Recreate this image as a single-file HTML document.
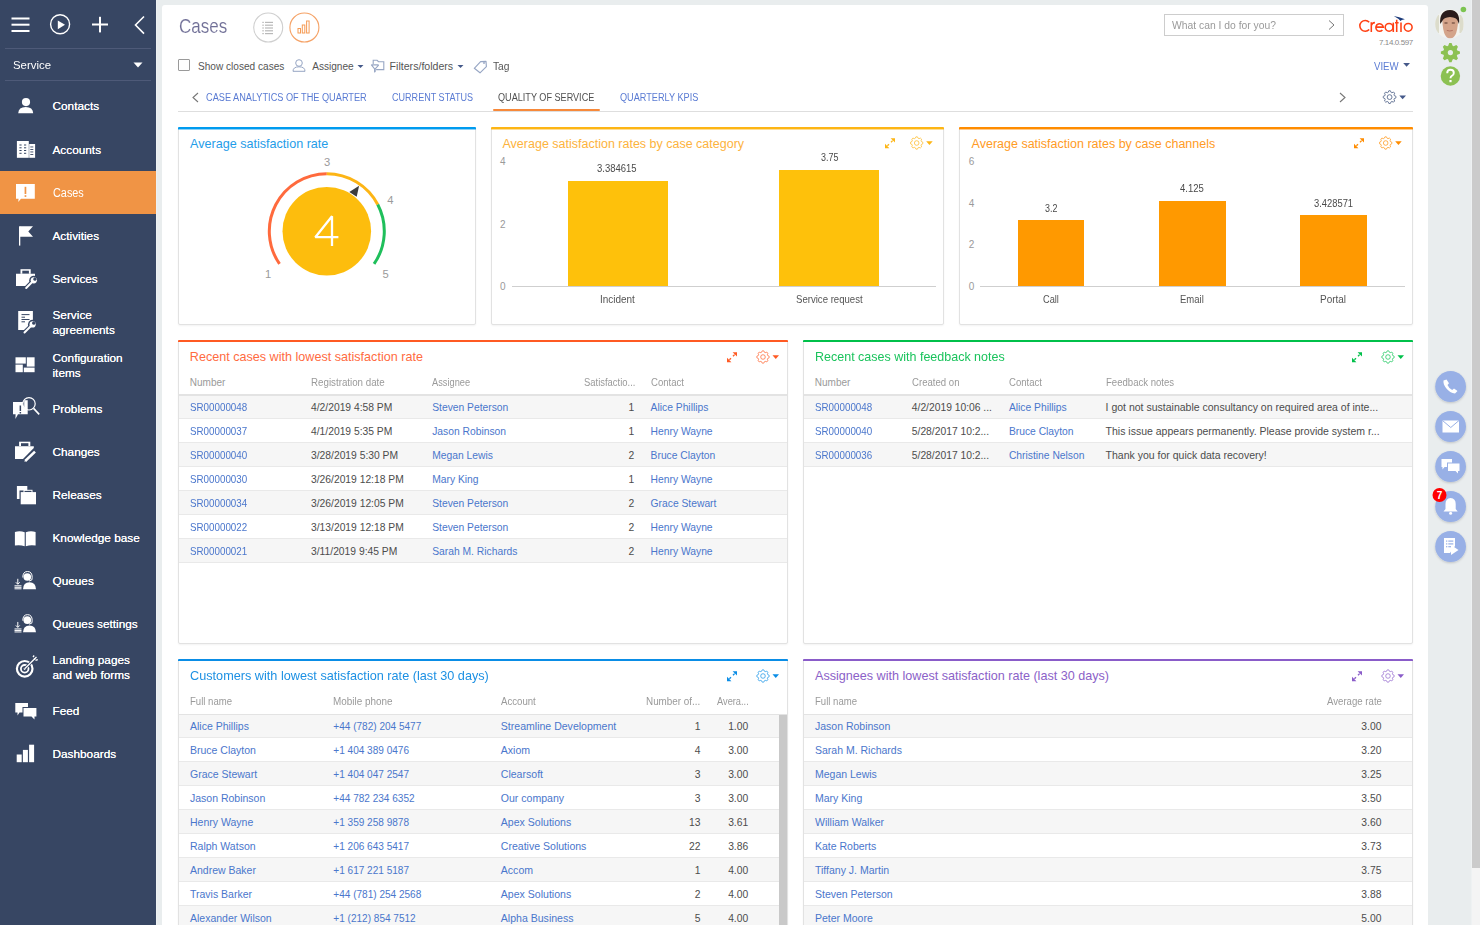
<!DOCTYPE html>
<html><head><meta charset="utf-8"><title>Cases</title>
<style>
*{box-sizing:border-box}
html,body{margin:0;padding:0}
body{width:1480px;height:925px;overflow:hidden;position:relative;background:#e9edee;font-family:"Liberation Sans", sans-serif;}
.abs{position:absolute}
.t{position:absolute;white-space:nowrap;line-height:1}
#sb{position:absolute;left:0;top:0;width:156px;height:925px;background:#374663}
#main{position:absolute;left:162px;top:5px;width:1266px;height:930px;background:#fff;border-radius:3px}
.panel{position:absolute;background:#fff;border:1px solid #e2e2e2;border-radius:2px;box-shadow:0 1px 2px rgba(0,0,0,0.05)}
</style></head><body>

<div id="sb"></div>
<div class="abs" style="left:156px;top:0;width:1px;height:925px;background:#eef1f2"></div>
<svg class="abs" style="left:0;top:0" width="156" height="50">
<rect x="11.5" y="17.5" width="18" height="2" fill="#fff"/>
<rect x="11.5" y="23.7" width="18" height="2" fill="#fff"/>
<rect x="11.5" y="30" width="18" height="2" fill="#fff"/>
<circle cx="60.1" cy="24.3" r="9.5" fill="none" stroke="#fff" stroke-width="1.4"/>
<path d="M57.8 20.5 L65 24.8 L57.8 29.2 Z" fill="#fff"/>
<rect x="92" y="23.5" width="16" height="2" fill="#fff"/>
<rect x="99" y="16.8" width="2" height="15.6" fill="#fff"/>
<path d="M144 16.5 L135.5 25 L144 33.6" fill="none" stroke="#fff" stroke-width="1.6"/>
</svg>
<div class="abs" style="left:5px;top:48px;width:146px;height:1px;background:#4e5a78"></div>
<div class="abs" style="left:5px;top:80px;width:146px;height:1px;background:#4e5a78"></div>
<div class="t" style="left:12.50px;top:60.00px;font-size:11.8px;color:#fff;transform:scaleX(0.9658);transform-origin:0 0;">Service</div>
<svg class="abs" style="left:133px;top:62px" width="10" height="6"><path d="M0.5 0.5 L9.5 0.5 L5 5.5 Z" fill="#fff"/></svg>
<div class="abs" style="left:0;top:171px;width:156px;height:43px;background:#f09445"></div>
<div class="t" style="left:52.50px;top:101.00px;font-size:11.8px;color:#fff;text-shadow:0 0 0.3px #fff;">Contacts</div>
<div class="t" style="left:52.50px;top:145.00px;font-size:11.8px;color:#fff;text-shadow:0 0 0.3px #fff;">Accounts</div>
<div class="t" style="left:52.50px;top:187.00px;font-size:12px;color:#fff;transform:scaleX(0.9055);transform-origin:0 0;">Cases</div>
<div class="t" style="left:52.50px;top:231.00px;font-size:11.8px;color:#fff;text-shadow:0 0 0.3px #fff;">Activities</div>
<div class="t" style="left:52.50px;top:274.00px;font-size:11.8px;color:#fff;text-shadow:0 0 0.3px #fff;">Services</div>
<div class="t" style="left:52.50px;top:310.00px;font-size:11.8px;color:#fff;text-shadow:0 0 0.3px #fff;">Service</div>
<div class="t" style="left:52.50px;top:325.00px;font-size:11.8px;color:#fff;text-shadow:0 0 0.3px #fff;">agreements</div>
<div class="t" style="left:52.50px;top:353.00px;font-size:11.8px;color:#fff;text-shadow:0 0 0.3px #fff;">Configuration</div>
<div class="t" style="left:52.50px;top:368.00px;font-size:11.8px;color:#fff;text-shadow:0 0 0.3px #fff;">items</div>
<div class="t" style="left:52.50px;top:404.00px;font-size:11.8px;color:#fff;text-shadow:0 0 0.3px #fff;">Problems</div>
<div class="t" style="left:52.50px;top:447.00px;font-size:11.8px;color:#fff;text-shadow:0 0 0.3px #fff;">Changes</div>
<div class="t" style="left:52.50px;top:490.00px;font-size:11.8px;color:#fff;text-shadow:0 0 0.3px #fff;">Releases</div>
<div class="t" style="left:52.50px;top:533.00px;font-size:11.8px;color:#fff;text-shadow:0 0 0.3px #fff;">Knowledge base</div>
<div class="t" style="left:52.50px;top:576.00px;font-size:11.8px;color:#fff;text-shadow:0 0 0.3px #fff;">Queues</div>
<div class="t" style="left:52.50px;top:619.00px;font-size:11.8px;color:#fff;text-shadow:0 0 0.3px #fff;">Queues settings</div>
<div class="t" style="left:52.50px;top:655.00px;font-size:11.8px;color:#fff;text-shadow:0 0 0.3px #fff;">Landing pages</div>
<div class="t" style="left:52.50px;top:670.00px;font-size:11.8px;color:#fff;text-shadow:0 0 0.3px #fff;">and web forms</div>
<div class="t" style="left:52.50px;top:706.00px;font-size:11.8px;color:#fff;text-shadow:0 0 0.3px #fff;">Feed</div>
<div class="t" style="left:52.50px;top:749.00px;font-size:11.8px;color:#fff;text-shadow:0 0 0.3px #fff;">Dashboards</div>
<svg class="abs" style="left:0;top:0" width="156" height="925"><circle cx="26" cy="102.1" r="4.1" fill="#fff"/><path d="M18.2 113.3 Q18.6 106.9 25.7 106.9 Q32.8 106.9 33.2 113.3 Z" fill="#fff"/><rect x="16.9" y="141" width="11.9" height="16.8" fill="#fff"/><rect x="29.2" y="144" width="5.9" height="13.8" fill="#fff"/><g fill="#374663"><rect x="19.4" y="144.5" width="2.2" height="1"/><rect x="24" y="144.5" width="2.2" height="1"/><rect x="19.4" y="147.3" width="2.2" height="1"/><rect x="24" y="147.3" width="2.2" height="1"/><rect x="19.4" y="150" width="2.2" height="1"/><rect x="24" y="150" width="2.2" height="1"/><rect x="19.4" y="152.8" width="2.2" height="1"/><rect x="24" y="152.8" width="2.2" height="1"/><rect x="30.3" y="146.5" width="3" height="0.9"/><rect x="30.3" y="149" width="3" height="0.9"/><rect x="30.3" y="151.5" width="3" height="0.9"/><rect x="30.3" y="154" width="3" height="0.9"/></g><path d="M16 184 L34.8 184 L34.8 198.8 L21 198.8 L18.2 202 L18.6 198.8 L16 198.8 Z" fill="#fff"/><rect x="24.6" y="186.8" width="1.7" height="7.2" fill="#f09445"/><rect x="24.6" y="195.2" width="1.7" height="1.7" fill="#f09445"/><rect x="19" y="226.3" width="1.3" height="19.3" fill="#fff"/><path d="M20 226.3 L33 226.3 L28.3 231.6 L33 236.8 L20 236.8 Z" fill="#fff"/><rect x="20.5" y="269.2" width="10.2" height="4.6" fill="#fff"/><rect x="22.3" y="270.7" width="6.6" height="3.1" fill="#374663"/><path d="M16 273.8 L35 273.8 L35 279.5 L28.5 286 L16 286 Z" fill="#fff"/><path d="M26.20 288.00 L33.80 280.30" stroke="#374663" stroke-width="4.2" stroke-linecap="round"/><circle cx="33.80" cy="280.30" r="4.6" fill="#374663"/><path d="M26.20 288.00 L32.40 281.72" stroke="#fff" stroke-width="2" stroke-linecap="round"/><circle cx="33.80" cy="280.30" r="3.1" fill="#fff"/><circle cx="34.92" cy="279.16" r="1.5" fill="#374663"/><rect x="34.02" y="278.26" width="1.8" height="1.8" fill="#374663" transform="rotate(45 35.63 278.45)"/><path d="M18.2 311 L32.9 311 L32.9 322 L24.5 330 L18.2 330 Z" fill="#fff"/><g fill="#374663"><rect x="21.5" y="314.1" width="8" height="1"/><rect x="21.5" y="316.7" width="3.5" height="1"/><rect x="21.5" y="319" width="8" height="1"/><rect x="21.5" y="321.3" width="3.5" height="1"/></g><path d="M24.50 332.50 L32.60 324.40" stroke="#374663" stroke-width="4.2" stroke-linecap="round"/><circle cx="32.60" cy="324.40" r="4.6" fill="#374663"/><path d="M24.50 332.50 L31.19 325.81" stroke="#fff" stroke-width="2" stroke-linecap="round"/><circle cx="32.60" cy="324.40" r="3.1" fill="#fff"/><circle cx="33.73" cy="323.27" r="1.5" fill="#374663"/><rect x="32.83" y="322.37" width="1.8" height="1.8" fill="#374663" transform="rotate(45 34.44 322.56)"/><rect x="15.5" y="357.3" width="10.3" height="6.3" fill="#fff"/><rect x="26.8" y="357.3" width="7.8" height="9.3" fill="#fff"/><rect x="15.5" y="364.6" width="7.3" height="7.6" fill="#fff"/><rect x="23.8" y="367.6" width="10.8" height="4.6" fill="#fff"/><path d="M13 402.1 L27.7 402.1 L27.7 414.2 L18 414.2 L15.4 419 L15.6 414.2 L13 414.2 Z" fill="#fff"/><rect x="19.6" y="405.5" width="1.5" height="5.5" fill="#374663"/><rect x="19.6" y="412" width="1.5" height="1.5" fill="#374663"/><circle cx="29" cy="403.8" r="6.3" fill="#374663"/><path d="M24.2 400.2 L27.7 400.2 L27.7 409.8 L24.2 409.8 Z" fill="#fff"/><circle cx="29" cy="403.8" r="6.2" fill="none" stroke="#fff" stroke-width="1.2"/><path d="M33.6 408.4 L39.2 414.4" stroke="#fff" stroke-width="1.6"/><rect x="19.1" y="441.7" width="11.2" height="4.5" fill="#fff"/><rect x="21" y="443.2" width="7.4" height="3" fill="#374663"/><path d="M15 446.2 L33.8 446.2 L33.8 448 L23 459.1 L15 459.1 Z" fill="#fff"/><path d="M24.5 461.8 L35.3 451.3" stroke="#374663" stroke-width="5"/><path d="M25.2 461 L35 451.6" stroke="#fff" stroke-width="2.6"/><path d="M24.2 462 L25.6 459.5 L26.7 460.6 Z" fill="#fff"/><rect x="16.9" y="486" width="10.4" height="13" fill="#fff"/><rect x="19.5" y="490.5" width="17.5" height="15" fill="#374663"/><rect x="20.7" y="492.1" width="15.3" height="12.2" fill="#fff"/><rect x="24" y="490.3" width="8" height="2.5" fill="none" stroke="#fff" stroke-width="1"/><path d="M14.9 532 Q20 530.5 24.7 532.3 L24.7 546.2 Q20 544.5 14.9 545.5 Z" fill="#fff"/><path d="M25.8 532.3 Q30.5 530.5 35.6 532 L35.6 545.5 Q30.5 544.5 25.8 546.2 Z" fill="#fff"/><circle cx="27.3" cy="577" r="3.8" fill="#fff"/><path d="M22.8 577.5 Q22.8 571.5 27.5 571.5 Q32.2 571.5 32.2 577.5 L31.8 580 L29 581" fill="none" stroke="#fff" stroke-width="1"/><path d="M23 589.2 Q23.3 582.3 29.5 582.3 Q35.7 582.3 36 589.2 Z" fill="#fff"/><path d="M17.8 578.8 L17.8 584 M15.9 582.3 L17.8 584.3 L19.7 582.3" stroke="#fff" stroke-width="1" fill="none"/><g fill="#fff"><rect x="14.5" y="585.3" width="7" height="1"/><rect x="14.5" y="586.8" width="7" height="1"/><rect x="14.5" y="588.3" width="7" height="1"/></g><circle cx="27.3" cy="620.15" r="3.8" fill="#fff"/><path d="M22.8 620.65 Q22.8 614.65 27.5 614.65 Q32.2 614.65 32.2 620.65 L31.8 623.15 L29 624.15" fill="none" stroke="#fff" stroke-width="1"/><path d="M23 632.35 Q23.3 625.4499999999999 29.5 625.4499999999999 Q35.7 625.4499999999999 36 632.35 Z" fill="#fff"/><path d="M17.8 621.9499999999999 L17.8 627.15 M15.9 625.4499999999999 L17.8 627.4499999999999 L19.7 625.4499999999999" stroke="#fff" stroke-width="1" fill="none"/><g fill="#fff"><rect x="14.5" y="628.4499999999999" width="7" height="1"/><rect x="14.5" y="629.9499999999999" width="7" height="1"/><rect x="14.5" y="631.4499999999999" width="7" height="1"/></g><circle cx="24.7" cy="668.8" r="7.8" fill="none" stroke="#fff" stroke-width="2.2"/><circle cx="24.7" cy="668.8" r="3.8" fill="none" stroke="#fff" stroke-width="1.8"/><circle cx="24.7" cy="668.8" r="1.1" fill="#fff"/><path d="M24.7 668.8 L35 658.5" stroke="#374663" stroke-width="3"/><path d="M24.7 668.8 L35 658.5" stroke="#fff" stroke-width="1.3"/><path d="M33 657 L34.2 655.5 M35.5 660.3 L37.8 659.6 M34 659.5 L36.5 657" stroke="#fff" stroke-width="1.3"/><path d="M15.3 703 L28 703 L28 712.5 L19.5 712.5 L17.5 715.5 L17.5 712.5 L15.3 712.5 Z" fill="#fff"/><rect x="22.5" y="707" width="14.5" height="10.5" fill="#374663"/><path d="M23.5 708 L36.4 708 L36.4 716.5 L34.5 716.5 L34.5 719.4 L31.5 716.5 L23.5 716.5 Z" fill="#fff"/><rect x="16.7" y="754.5" width="5" height="7.7" fill="#fff"/><rect x="22.9" y="749.9" width="5" height="12.3" fill="#fff"/><rect x="29.1" y="744.7" width="5" height="17.5" fill="#fff"/></svg>
<div id="main"></div>
<div class="t" style="left:178.60px;top:16.00px;font-size:20px;color:#6f6e96;transform:scaleX(0.8502);transform-origin:0 0;-webkit-text-stroke:0.15px #fff;">Cases</div>
<svg class="abs" style="left:250px;top:10px" width="75" height="36">
<circle cx="18.2" cy="17.5" r="14.5" fill="#fff" stroke="#cfcfcf" stroke-width="1.1"/>
<g fill="#b9b9b9"><rect x="12.3" y="11.8" width="1.5" height="1.2"/><rect x="15" y="11.8" width="8" height="1.2"/>
<rect x="12.3" y="14.6" width="1.5" height="1.2"/><rect x="15" y="14.6" width="8" height="1.2"/>
<rect x="12.3" y="17.4" width="1.5" height="1.2"/><rect x="15" y="17.4" width="8" height="1.2"/>
<rect x="12.3" y="20.2" width="1.5" height="1.2"/><rect x="15" y="20.2" width="8" height="1.2"/>
<rect x="12.3" y="23" width="1.5" height="1.2"/><rect x="15" y="23" width="8" height="1.2"/></g>
<circle cx="54.4" cy="17.5" r="14.5" fill="#fff" stroke="#f5a266" stroke-width="1.1"/>
<g fill="none" stroke="#f59b55" stroke-width="1"><rect x="48" y="18.5" width="2.5" height="4.5"/><rect x="52.3" y="15" width="2.5" height="8"/><rect x="56.6" y="11" width="2.5" height="12"/></g>
</svg>
<div class="abs" style="left:178px;top:59px;width:12.2px;height:12.2px;border:1.5px solid #9a9a9a;border-radius:1px"></div>
<div class="t" style="left:198.00px;top:62.00px;font-size:10.1px;color:#555;">Show closed cases</div>
<svg class="abs" style="left:290px;top:56px" width="200" height="20">
<circle cx="9" cy="7" r="3.3" fill="none" stroke="#97a6c4" stroke-width="1"/>
<path d="M3 15.3 Q3 10.8 9 10.8 Q15 10.8 15 15.3 Z" fill="none" stroke="#97a6c4" stroke-width="1"/>
<path d="M67.5 9 L73.5 9 L70.5 12 Z" fill="#45598a"/>
<path d="M83.2 8 L83.2 4.3 L87.1 4.3 L88.5 5.7 L93.8 5.7 L93.8 13.6 L86.1 13.6" fill="none" stroke="#97a6c4" stroke-width="1.1"/><path d="M81.6 9.2 Q81.2 8.9 82 8.9 L88 8.9 Q88.8 8.9 88.4 9.4 L85.2 12.9 L85.2 15.6 L84.6 15.9 L84.6 12.9 Z" fill="#fff" stroke="#97a6c4" stroke-width="1.1" stroke-linejoin="round"/>
<path d="M167.5 9 L173.5 9 L170.5 12 Z" fill="#45598a"/>
<path d="M184.3 12.3 L190.6 5.6 L196 5.4 L196.4 10.6 L190 16.8 Z" fill="none" stroke="#97a6c4" stroke-width="1.15" stroke-linejoin="round"/>
<circle cx="194" cy="7" r="0.9" fill="#97a6c4"/>
</svg>
<div class="t" style="left:312.20px;top:62.00px;font-size:10.1px;color:#555;">Assignee</div>
<div class="t" style="left:389.60px;top:61.00px;font-size:10.6px;color:#555;">Filters/folders</div>
<div class="t" style="left:492.60px;top:62.00px;font-size:10.1px;color:#555;transform:scaleX(1.0132);transform-origin:0 0;">Tag</div>
<div class="abs" style="left:1164px;top:14px;width:179.5px;height:21.5px;border:1px solid #cdcdcd;background:#fff"></div>
<div class="t" style="left:1172.30px;top:20.00px;font-size:11px;color:#9a9a9a;transform:scaleX(0.9397);transform-origin:0 0;">What can I do for you?</div>
<svg class="abs" style="left:1326px;top:18px" width="12" height="14"><path d="M3 2.5 L8 7 L3 11.5" fill="none" stroke="#777" stroke-width="1"/></svg>
<svg class="abs" style="left:1355px;top:12px" width="62" height="24" viewBox="1355 12 62 24">
<g fill="none" stroke="#ff4013" stroke-width="1.55">
<path d="M1369.2 22.2 A5.4 5.4 0 1 0 1369.2 29.5"/>
<path d="M1371.3 32 L1371.3 22.3 M1371.3 25.6 Q1372 22.6 1374.9 22.6"/>
<path d="M1375.9 27.1 L1383.3 27.1 A3.75 3.75 0 1 0 1382.4 30"/>
<circle cx="1389.1" cy="27.3" r="3.9"/>
<path d="M1393.3 22.6 L1393.3 32"/>
<path d="M1396.7 19.8 L1396.7 32 M1395 22.8 L1398.6 22.8"/>
<path d="M1401 22.6 L1401 32"/>
<circle cx="1408.2" cy="27.3" r="3.9"/>
</g>
<path d="M1393.8 16 Q1399 17 1404.9 19.3 L1401.8 20 L1400.5 21 Q1398.5 18.5 1393.8 16 Z" fill="#1b3a7a"/>
</svg>
<div class="t" style="left:1379.00px;top:39.00px;font-size:8px;color:#8a8a8a;letter-spacing:-0.4px;">7.14.0.597</div>
<div class="t" style="left:1374.20px;top:61.00px;font-size:11px;color:#5a7bd3;transform:scaleX(0.8751);transform-origin:0 0;">VIEW</div>
<svg class="abs" style="left:1402px;top:62px" width="10" height="6"><path d="M1.2 1 L8 1 L4.6 4.8 Z" fill="#45598a"/></svg>
<svg class="abs" style="left:188px;top:90px" width="14" height="16"><path d="M10 3 L5 7.5 L10 12" fill="none" stroke="#777" stroke-width="1.1"/></svg>
<div class="t" style="left:206.20px;top:93.00px;font-size:10px;color:#5a7bd3;transform:scaleX(0.9181);transform-origin:0 0;">CASE ANALYTICS OF THE QUARTER</div>
<div class="t" style="left:392.30px;top:93.00px;font-size:10px;color:#5a7bd3;transform:scaleX(0.9055);transform-origin:0 0;">CURRENT STATUS</div>
<div class="t" style="left:498.30px;top:93.00px;font-size:10px;color:#505050;transform:scaleX(0.9104);transform-origin:0 0;">QUALITY OF SERVICE</div>
<div class="t" style="left:619.80px;top:93.00px;font-size:10px;color:#5a7bd3;transform:scaleX(0.9149);transform-origin:0 0;">QUARTERLY KPIS</div>
<div class="abs" style="left:178px;top:111px;width:1235px;height:1px;background:#dedede"></div>
<div class="abs" style="left:493px;top:109px;width:107px;height:2.4px;background:#f7893a;border-radius:1px"></div>
<svg class="abs" style="left:1336px;top:90px" width="14" height="16"><path d="M4 3 L9 7.5 L4 12" fill="none" stroke="#777" stroke-width="1.1"/></svg>
<div class="panel" style="left:178px;top:127px;width:298px;height:198px"></div>
<div class="abs" style="left:178px;top:127px;width:298px;height:2px;background:#009bef;border-radius:1px 1px 0 0"></div>
<div class="abs" style="left:178px;top:129px;width:298px;height:1px;background:#009bef;opacity:0.45"></div>
<div class="t" style="left:190.00px;top:138.00px;font-size:12.6px;color:#1f9de9;">Average satisfaction rate</div>
<svg class="abs" style="left:0;top:0" width="480" height="330"><path d="M279.53 263.93 A57.5 57.5 0 0 1 326.80 173.70" fill="none" stroke="#ff6a3d" stroke-width="3"/><path d="M326.80 173.70 A57.5 57.5 0 0 1 377.73 204.52" fill="none" stroke="#fdb515" stroke-width="3"/><path d="M377.73 204.52 A57.5 57.5 0 0 1 374.07 263.93" fill="none" stroke="#1fbf5b" stroke-width="3"/><circle cx="326.8" cy="231.2" r="44.3" fill="#fdbd0d"/><path d="M359.1 185.7 L349.3 192 L356.7 196.8 Z" fill="#3d3d3d"/><path d="M332 246 L332 216.2 L315.3 237.2 L338.4 237.2" fill="none" stroke="#fff" stroke-width="2.3" stroke-linejoin="bevel"/></svg>
<div class="t" style="left:323.99px;top:157.00px;font-size:11.2px;color:#9a9a9a;">3</div>
<div class="t" style="left:387.19px;top:195.00px;font-size:11.2px;color:#9a9a9a;">4</div>
<div class="t" style="left:265.09px;top:269.00px;font-size:11.2px;color:#9a9a9a;">1</div>
<div class="t" style="left:382.49px;top:269.00px;font-size:11.2px;color:#9a9a9a;">5</div>
<div class="panel" style="left:491px;top:127px;width:453px;height:198px"></div>
<div class="abs" style="left:491px;top:127px;width:453px;height:2px;background:#fdb514;border-radius:1px 1px 0 0"></div>
<div class="abs" style="left:491px;top:129px;width:453px;height:1px;background:#fdb514;opacity:0.45"></div>
<div class="t" style="left:502.50px;top:138.00px;font-size:12.5px;color:#fdb33d;">Average satisfaction rates by case category</div>
<svg class="abs" style="left:883.0px;top:134.4px" width="53.7" height="18" viewBox="883.0 134.4 53.7 18"><path d="M895.00 138.60 L890.60 138.60 L895.00 143.00 Z" fill="#fdb514"/><path d="M885.00 148.60 L885.00 144.20 L889.40 148.60 Z" fill="#fdb514"/><path d="M892.60 141.00 L891.00 142.60 M889.00 144.60 L887.40 146.20" stroke="#fdb514" stroke-width="1.3"/><path d="M915.94 137.25 L917.46 137.25 L918.21 138.74 L918.92 139.03 L920.52 138.51 L921.59 139.58 L921.07 141.18 L921.36 141.89 L922.85 142.64 L922.85 144.16 L921.36 144.91 L921.07 145.62 L921.59 147.22 L920.52 148.29 L918.92 147.77 L918.21 148.06 L917.46 149.55 L915.94 149.55 L915.19 148.06 L914.48 147.77 L912.88 148.29 L911.81 147.22 L912.33 145.62 L912.04 144.91 L910.55 144.16 L910.55 142.64 L912.04 141.89 L912.33 141.18 L911.81 139.58 L912.88 138.51 L914.48 139.03 L915.19 138.74 Z" fill="none" stroke="#fdb514" stroke-width="0.9" opacity="0.75" stroke-linejoin="round"/><circle cx="916.70" cy="143.40" r="2.3" fill="none" stroke="#fdb514" stroke-width="0.9" opacity="0.75"/><path d="M926.20 141.60 L932.70 141.60 L929.45 145.40 Z" fill="#fdb514"/></svg>
<div class="abs" style="left:512px;top:285.5px;width:424px;height:1px;background:#cfcfcf"></div>
<div class="t" style="left:499.92px;top:157.00px;font-size:10px;color:#9a9a9a;">4</div>
<div class="t" style="left:499.92px;top:220.00px;font-size:10px;color:#9a9a9a;">2</div>
<div class="t" style="left:499.92px;top:282.00px;font-size:10px;color:#9a9a9a;">0</div>
<div class="abs" style="left:567.6px;top:180.9px;width:100px;height:105px;background:#fec10b"></div>
<div class="abs" style="left:779.4px;top:170.1px;width:100px;height:115.8px;background:#fec10b"></div>
<div class="t" style="left:597.45px;top:164.00px;font-size:10.2px;color:#4a4a4a;transform:scaleX(0.9285);transform-origin:0 0;">3.384615</div>
<div class="t" style="left:820.70px;top:153.00px;font-size:10.2px;color:#4a4a4a;transform:scaleX(0.8765);transform-origin:0 0;">3.75</div>
<div class="t" style="left:600.35px;top:295.00px;font-size:10.2px;color:#555;transform:scaleX(0.9769);transform-origin:0 0;">Incident</div>
<div class="t" style="left:796.15px;top:295.00px;font-size:10.2px;color:#555;transform:scaleX(0.9412);transform-origin:0 0;">Service request</div>
<div class="panel" style="left:959px;top:127px;width:454px;height:198px"></div>
<div class="abs" style="left:959px;top:127px;width:454px;height:2px;background:#ff8c00;border-radius:1px 1px 0 0"></div>
<div class="abs" style="left:959px;top:129px;width:454px;height:1px;background:#ff8c00;opacity:0.45"></div>
<div class="t" style="left:971.60px;top:138.00px;font-size:12.5px;color:#ff9b25;">Average satisfaction rates by case channels</div>
<svg class="abs" style="left:1351.5px;top:134.4px" width="53.7" height="18" viewBox="1351.5 134.4 53.7 18"><path d="M1363.50 138.60 L1359.10 138.60 L1363.50 143.00 Z" fill="#ff8c00"/><path d="M1353.50 148.60 L1353.50 144.20 L1357.90 148.60 Z" fill="#ff8c00"/><path d="M1361.10 141.00 L1359.50 142.60 M1357.50 144.60 L1355.90 146.20" stroke="#ff8c00" stroke-width="1.3"/><path d="M1384.44 137.25 L1385.96 137.25 L1386.71 138.74 L1387.42 139.03 L1389.02 138.51 L1390.09 139.58 L1389.57 141.18 L1389.86 141.89 L1391.35 142.64 L1391.35 144.16 L1389.86 144.91 L1389.57 145.62 L1390.09 147.22 L1389.02 148.29 L1387.42 147.77 L1386.71 148.06 L1385.96 149.55 L1384.44 149.55 L1383.69 148.06 L1382.98 147.77 L1381.38 148.29 L1380.31 147.22 L1380.83 145.62 L1380.54 144.91 L1379.05 144.16 L1379.05 142.64 L1380.54 141.89 L1380.83 141.18 L1380.31 139.58 L1381.38 138.51 L1382.98 139.03 L1383.69 138.74 Z" fill="none" stroke="#ff8c00" stroke-width="0.9" opacity="0.75" stroke-linejoin="round"/><circle cx="1385.20" cy="143.40" r="2.3" fill="none" stroke="#ff8c00" stroke-width="0.9" opacity="0.75"/><path d="M1394.70 141.60 L1401.20 141.60 L1397.95 145.40 Z" fill="#ff8c00"/></svg>
<div class="abs" style="left:980px;top:285.5px;width:425px;height:1px;background:#cfcfcf"></div>
<div class="t" style="left:968.72px;top:157.00px;font-size:10px;color:#9a9a9a;">6</div>
<div class="t" style="left:968.72px;top:199.00px;font-size:10px;color:#9a9a9a;">4</div>
<div class="t" style="left:968.72px;top:240.00px;font-size:10px;color:#9a9a9a;">2</div>
<div class="t" style="left:968.72px;top:282.00px;font-size:10px;color:#9a9a9a;">0</div>
<div class="abs" style="left:1017.6px;top:220.1px;width:66.4px;height:65.8px;background:#ff9900"></div>
<div class="t" style="left:1044.60px;top:204.00px;font-size:10.2px;color:#4a4a4a;transform:scaleX(0.8745);transform-origin:0 0;">3.2</div>
<div class="t" style="left:1042.85px;top:295.00px;font-size:10.2px;color:#555;transform:scaleX(0.9049);transform-origin:0 0;">Call</div>
<div class="abs" style="left:1159px;top:200.9px;width:66.6px;height:85.0px;background:#ff9900"></div>
<div class="t" style="left:1180.40px;top:184.00px;font-size:10.2px;color:#4a4a4a;transform:scaleX(0.9324);transform-origin:0 0;">4.125</div>
<div class="t" style="left:1180.40px;top:295.00px;font-size:10.2px;color:#555;transform:scaleX(0.9331);transform-origin:0 0;">Email</div>
<div class="abs" style="left:1300.3px;top:215.4px;width:66.3px;height:70.5px;background:#ff9900"></div>
<div class="t" style="left:1313.90px;top:199.00px;font-size:10.2px;color:#4a4a4a;transform:scaleX(0.9191);transform-origin:0 0;">3.428571</div>
<div class="t" style="left:1320.40px;top:295.00px;font-size:10.2px;color:#555;transform:scaleX(0.9795);transform-origin:0 0;">Portal</div>
<div class="panel" style="left:178px;top:340px;width:610px;height:304px"></div>
<div class="abs" style="left:178px;top:340px;width:610px;height:2px;background:#ff5a23;border-radius:1px 1px 0 0"></div>
<div class="t" style="left:189.80px;top:351.00px;font-size:12.6px;color:#ff6b3f;">Recent cases with lowest satisfaction rate</div>
<svg class="abs" style="left:724.8px;top:347.7px" width="58.0" height="18" viewBox="724.8 347.7 58.0 18"><path d="M736.80 351.90 L732.40 351.90 L736.80 356.30 Z" fill="#ff5a23"/><path d="M726.80 361.90 L726.80 357.50 L731.20 361.90 Z" fill="#ff5a23"/><path d="M734.40 354.30 L732.80 355.90 M730.80 357.90 L729.20 359.50" stroke="#ff5a23" stroke-width="1.3"/><path d="M762.04 350.55 L763.56 350.55 L764.31 352.04 L765.02 352.33 L766.62 351.81 L767.69 352.88 L767.17 354.48 L767.46 355.19 L768.95 355.94 L768.95 357.46 L767.46 358.21 L767.17 358.92 L767.69 360.52 L766.62 361.59 L765.02 361.07 L764.31 361.36 L763.56 362.85 L762.04 362.85 L761.29 361.36 L760.58 361.07 L758.98 361.59 L757.91 360.52 L758.43 358.92 L758.14 358.21 L756.65 357.46 L756.65 355.94 L758.14 355.19 L758.43 354.48 L757.91 352.88 L758.98 351.81 L760.58 352.33 L761.29 352.04 Z" fill="none" stroke="#ff5a23" stroke-width="0.9" opacity="0.75" stroke-linejoin="round"/><circle cx="762.80" cy="356.70" r="2.3" fill="none" stroke="#ff5a23" stroke-width="0.9" opacity="0.75"/><path d="M772.30 354.90 L778.80 354.90 L775.55 358.70 Z" fill="#ff5a23"/></svg>
<div class="t" style="left:189.80px;top:378.00px;font-size:10px;color:#9a9a9a;">Number</div>
<div class="t" style="left:311.00px;top:378.00px;font-size:10px;color:#9a9a9a;transform:scaleX(0.9749);transform-origin:0 0;">Registration date</div>
<div class="t" style="left:432.20px;top:378.00px;font-size:10px;color:#9a9a9a;transform:scaleX(0.9262);transform-origin:0 0;">Assignee</div>
<div class="t" style="left:650.60px;top:378.00px;font-size:10px;color:#9a9a9a;transform:scaleX(0.9575);transform-origin:0 0;">Contact</div>
<div class="t" style="left:583.50px;top:378.00px;font-size:10px;color:#9a9a9a;transform:scaleX(0.9437);transform-origin:0 0;">Satisfactio...</div>
<div class="abs" style="left:179px;top:395px;width:608px;height:23px;background:#f6f6f6"></div>
<div class="abs" style="left:179px;top:418px;width:608px;height:1px;background:#e9e9e9"></div>
<div class="abs" style="left:179px;top:442px;width:608px;height:1px;background:#e9e9e9"></div>
<div class="abs" style="left:179px;top:443px;width:608px;height:23px;background:#f6f6f6"></div>
<div class="abs" style="left:179px;top:466px;width:608px;height:1px;background:#e9e9e9"></div>
<div class="abs" style="left:179px;top:490px;width:608px;height:1px;background:#e9e9e9"></div>
<div class="abs" style="left:179px;top:491px;width:608px;height:23px;background:#f6f6f6"></div>
<div class="abs" style="left:179px;top:514px;width:608px;height:1px;background:#e9e9e9"></div>
<div class="abs" style="left:179px;top:538px;width:608px;height:1px;background:#e9e9e9"></div>
<div class="abs" style="left:179px;top:539px;width:608px;height:23px;background:#f6f6f6"></div>
<div class="abs" style="left:179px;top:562px;width:608px;height:1px;background:#e9e9e9"></div>
<div class="abs" style="left:179px;top:394px;width:608px;height:2px;background:#e3e3e3"></div>
<div class="t" style="left:189.80px;top:403.00px;font-size:10.3px;color:#4a76cc;transform:scaleX(0.9512);transform-origin:0 0;">SR00000048</div>
<div class="t" style="left:311.00px;top:403.00px;font-size:10.3px;color:#4c4c4c;">4/2/2019 4:58 PM</div>
<div class="t" style="left:432.20px;top:403.00px;font-size:10.3px;color:#4a76cc;">Steven Peterson</div>
<div class="t" style="left:628.57px;top:403.00px;font-size:10.3px;color:#4c4c4c;">1</div>
<div class="t" style="left:650.60px;top:403.00px;font-size:10.3px;color:#4a76cc;">Alice Phillips</div>
<div class="t" style="left:189.80px;top:427.00px;font-size:10.3px;color:#4a76cc;transform:scaleX(0.9512);transform-origin:0 0;">SR00000037</div>
<div class="t" style="left:311.00px;top:427.00px;font-size:10.3px;color:#4c4c4c;">4/1/2019 5:35 PM</div>
<div class="t" style="left:432.20px;top:427.00px;font-size:10.3px;color:#4a76cc;">Jason Robinson</div>
<div class="t" style="left:628.57px;top:427.00px;font-size:10.3px;color:#4c4c4c;">1</div>
<div class="t" style="left:650.60px;top:427.00px;font-size:10.3px;color:#4a76cc;">Henry Wayne</div>
<div class="t" style="left:189.80px;top:451.00px;font-size:10.3px;color:#4a76cc;transform:scaleX(0.9512);transform-origin:0 0;">SR00000040</div>
<div class="t" style="left:311.00px;top:451.00px;font-size:10.3px;color:#4c4c4c;">3/28/2019 5:30 PM</div>
<div class="t" style="left:432.20px;top:451.00px;font-size:10.3px;color:#4a76cc;">Megan Lewis</div>
<div class="t" style="left:628.57px;top:451.00px;font-size:10.3px;color:#4c4c4c;">2</div>
<div class="t" style="left:650.60px;top:451.00px;font-size:10.3px;color:#4a76cc;">Bruce Clayton</div>
<div class="t" style="left:189.80px;top:475.00px;font-size:10.3px;color:#4a76cc;transform:scaleX(0.9512);transform-origin:0 0;">SR00000030</div>
<div class="t" style="left:311.00px;top:475.00px;font-size:10.3px;color:#4c4c4c;">3/26/2019 12:18 PM</div>
<div class="t" style="left:432.20px;top:475.00px;font-size:10.3px;color:#4a76cc;">Mary King</div>
<div class="t" style="left:628.57px;top:475.00px;font-size:10.3px;color:#4c4c4c;">1</div>
<div class="t" style="left:650.60px;top:475.00px;font-size:10.3px;color:#4a76cc;">Henry Wayne</div>
<div class="t" style="left:189.80px;top:499.00px;font-size:10.3px;color:#4a76cc;transform:scaleX(0.9512);transform-origin:0 0;">SR00000034</div>
<div class="t" style="left:311.00px;top:499.00px;font-size:10.3px;color:#4c4c4c;">3/26/2019 12:05 PM</div>
<div class="t" style="left:432.20px;top:499.00px;font-size:10.3px;color:#4a76cc;">Steven Peterson</div>
<div class="t" style="left:628.57px;top:499.00px;font-size:10.3px;color:#4c4c4c;">2</div>
<div class="t" style="left:650.60px;top:499.00px;font-size:10.3px;color:#4a76cc;">Grace Stewart</div>
<div class="t" style="left:189.80px;top:523.00px;font-size:10.3px;color:#4a76cc;transform:scaleX(0.9512);transform-origin:0 0;">SR00000022</div>
<div class="t" style="left:311.00px;top:523.00px;font-size:10.3px;color:#4c4c4c;">3/13/2019 12:18 PM</div>
<div class="t" style="left:432.20px;top:523.00px;font-size:10.3px;color:#4a76cc;">Steven Peterson</div>
<div class="t" style="left:628.57px;top:523.00px;font-size:10.3px;color:#4c4c4c;">2</div>
<div class="t" style="left:650.60px;top:523.00px;font-size:10.3px;color:#4a76cc;">Henry Wayne</div>
<div class="t" style="left:189.80px;top:547.00px;font-size:10.3px;color:#4a76cc;transform:scaleX(0.9512);transform-origin:0 0;">SR00000021</div>
<div class="t" style="left:311.00px;top:547.00px;font-size:10.3px;color:#4c4c4c;">3/11/2019 9:45 PM</div>
<div class="t" style="left:432.20px;top:547.00px;font-size:10.3px;color:#4a76cc;">Sarah M. Richards</div>
<div class="t" style="left:628.57px;top:547.00px;font-size:10.3px;color:#4c4c4c;">2</div>
<div class="t" style="left:650.60px;top:547.00px;font-size:10.3px;color:#4a76cc;">Henry Wayne</div>
<div class="panel" style="left:803px;top:340px;width:610px;height:304px"></div>
<div class="abs" style="left:803px;top:340px;width:610px;height:2px;background:#00c04a;border-radius:1px 1px 0 0"></div>
<div class="t" style="left:814.80px;top:351.00px;font-size:12.6px;color:#1ac35c;transform:scaleX(0.9926);transform-origin:0 0;">Recent cases with feedback notes</div>
<svg class="abs" style="left:1350.2px;top:347.7px" width="58.0" height="18" viewBox="1350.2 347.7 58.0 18"><path d="M1362.20 351.90 L1357.80 351.90 L1362.20 356.30 Z" fill="#00c04a"/><path d="M1352.20 361.90 L1352.20 357.50 L1356.60 361.90 Z" fill="#00c04a"/><path d="M1359.80 354.30 L1358.20 355.90 M1356.20 357.90 L1354.60 359.50" stroke="#00c04a" stroke-width="1.3"/><path d="M1387.44 350.55 L1388.96 350.55 L1389.71 352.04 L1390.42 352.33 L1392.02 351.81 L1393.09 352.88 L1392.57 354.48 L1392.86 355.19 L1394.35 355.94 L1394.35 357.46 L1392.86 358.21 L1392.57 358.92 L1393.09 360.52 L1392.02 361.59 L1390.42 361.07 L1389.71 361.36 L1388.96 362.85 L1387.44 362.85 L1386.69 361.36 L1385.98 361.07 L1384.38 361.59 L1383.31 360.52 L1383.83 358.92 L1383.54 358.21 L1382.05 357.46 L1382.05 355.94 L1383.54 355.19 L1383.83 354.48 L1383.31 352.88 L1384.38 351.81 L1385.98 352.33 L1386.69 352.04 Z" fill="none" stroke="#00c04a" stroke-width="0.9" opacity="0.75" stroke-linejoin="round"/><circle cx="1388.20" cy="356.70" r="2.3" fill="none" stroke="#00c04a" stroke-width="0.9" opacity="0.75"/><path d="M1397.70 354.90 L1404.20 354.90 L1400.95 358.70 Z" fill="#00c04a"/></svg>
<div class="t" style="left:814.80px;top:378.00px;font-size:10px;color:#9a9a9a;">Number</div>
<div class="t" style="left:911.80px;top:378.00px;font-size:10px;color:#9a9a9a;transform:scaleX(0.9600);transform-origin:0 0;">Created on</div>
<div class="t" style="left:1008.90px;top:378.00px;font-size:10px;color:#9a9a9a;transform:scaleX(0.9575);transform-origin:0 0;">Contact</div>
<div class="t" style="left:1105.60px;top:378.00px;font-size:10px;color:#9a9a9a;transform:scaleX(0.9570);transform-origin:0 0;">Feedback notes</div>
<div class="abs" style="left:804px;top:395px;width:608px;height:23px;background:#f6f6f6"></div>
<div class="abs" style="left:804px;top:418px;width:608px;height:1px;background:#e9e9e9"></div>
<div class="abs" style="left:804px;top:442px;width:608px;height:1px;background:#e9e9e9"></div>
<div class="abs" style="left:804px;top:443px;width:608px;height:23px;background:#f6f6f6"></div>
<div class="abs" style="left:804px;top:466px;width:608px;height:1px;background:#e9e9e9"></div>
<div class="abs" style="left:804px;top:394px;width:608px;height:2px;background:#e3e3e3"></div>
<div class="t" style="left:814.80px;top:403.00px;font-size:10.3px;color:#4a76cc;transform:scaleX(0.9512);transform-origin:0 0;">SR00000048</div>
<div class="t" style="left:911.80px;top:403.00px;font-size:10.3px;color:#4c4c4c;">4/2/2019 10:06 ...</div>
<div class="t" style="left:1008.90px;top:403.00px;font-size:10.3px;color:#4a76cc;">Alice Phillips</div>
<div class="t" style="left:1105.60px;top:402.00px;font-size:10.5px;color:#4c4c4c;">I got not sustainable consultancy on required area of inte...</div>
<div class="t" style="left:814.80px;top:427.00px;font-size:10.3px;color:#4a76cc;transform:scaleX(0.9512);transform-origin:0 0;">SR00000040</div>
<div class="t" style="left:911.80px;top:427.00px;font-size:10.3px;color:#4c4c4c;">5/28/2017 10:2...</div>
<div class="t" style="left:1008.90px;top:427.00px;font-size:10.3px;color:#4a76cc;">Bruce Clayton</div>
<div class="t" style="left:1105.60px;top:426.00px;font-size:10.5px;color:#4c4c4c;">This issue appears permanently. Please provide system r...</div>
<div class="t" style="left:814.80px;top:451.00px;font-size:10.3px;color:#4a76cc;transform:scaleX(0.9512);transform-origin:0 0;">SR00000036</div>
<div class="t" style="left:911.80px;top:451.00px;font-size:10.3px;color:#4c4c4c;">5/28/2017 10:2...</div>
<div class="t" style="left:1008.90px;top:451.00px;font-size:10.3px;color:#4a76cc;">Christine Nelson</div>
<div class="t" style="left:1105.60px;top:450.00px;font-size:10.5px;color:#4c4c4c;">Thank you for quick data recovery!</div>
<div class="panel" style="left:178px;top:659px;width:610px;height:301px"></div>
<div class="abs" style="left:178px;top:659px;width:610px;height:2px;background:#0a8de6;border-radius:1px 1px 0 0"></div>
<div class="t" style="left:190.00px;top:670.00px;font-size:12.6px;color:#1c90e3;transform:scaleX(1.0070);transform-origin:0 0;">Customers with lowest satisfaction rate (last 30 days)</div>
<svg class="abs" style="left:725.4px;top:666.8px" width="58.0" height="18" viewBox="725.4 666.8 58.0 18"><path d="M737.40 671.00 L733.00 671.00 L737.40 675.40 Z" fill="#0a8de6"/><path d="M727.40 681.00 L727.40 676.60 L731.80 681.00 Z" fill="#0a8de6"/><path d="M735.00 673.40 L733.40 675.00 M731.40 677.00 L729.80 678.60" stroke="#0a8de6" stroke-width="1.3"/><path d="M762.64 669.65 L764.16 669.65 L764.91 671.14 L765.62 671.43 L767.22 670.91 L768.29 671.98 L767.77 673.58 L768.06 674.29 L769.55 675.04 L769.55 676.56 L768.06 677.31 L767.77 678.02 L768.29 679.62 L767.22 680.69 L765.62 680.17 L764.91 680.46 L764.16 681.95 L762.64 681.95 L761.89 680.46 L761.18 680.17 L759.58 680.69 L758.51 679.62 L759.03 678.02 L758.74 677.31 L757.25 676.56 L757.25 675.04 L758.74 674.29 L759.03 673.58 L758.51 671.98 L759.58 670.91 L761.18 671.43 L761.89 671.14 Z" fill="none" stroke="#0a8de6" stroke-width="0.9" opacity="0.75" stroke-linejoin="round"/><circle cx="763.40" cy="675.80" r="2.3" fill="none" stroke="#0a8de6" stroke-width="0.9" opacity="0.75"/><path d="M772.90 674.00 L779.40 674.00 L776.15 677.80 Z" fill="#0a8de6"/></svg>
<div class="t" style="left:190.00px;top:697.00px;font-size:10px;color:#9a9a9a;transform:scaleX(0.9566);transform-origin:0 0;">Full name</div>
<div class="t" style="left:333.30px;top:697.00px;font-size:10px;color:#9a9a9a;transform:scaleX(0.9909);transform-origin:0 0;">Mobile phone</div>
<div class="t" style="left:500.80px;top:697.00px;font-size:10px;color:#9a9a9a;transform:scaleX(0.9631);transform-origin:0 0;">Account</div>
<div class="t" style="left:646.20px;top:697.00px;font-size:10px;color:#9a9a9a;transform:scaleX(0.9869);transform-origin:0 0;">Number of...</div>
<div class="t" style="left:716.50px;top:697.00px;font-size:10px;color:#9a9a9a;transform:scaleX(0.9248);transform-origin:0 0;">Avera...</div>
<div class="abs" style="left:179px;top:714px;width:600px;height:23px;background:#f6f6f6"></div>
<div class="abs" style="left:179px;top:737px;width:600px;height:1px;background:#e9e9e9"></div>
<div class="abs" style="left:179px;top:761px;width:600px;height:1px;background:#e9e9e9"></div>
<div class="abs" style="left:179px;top:762px;width:600px;height:23px;background:#f6f6f6"></div>
<div class="abs" style="left:179px;top:785px;width:600px;height:1px;background:#e9e9e9"></div>
<div class="abs" style="left:179px;top:809px;width:600px;height:1px;background:#e9e9e9"></div>
<div class="abs" style="left:179px;top:810px;width:600px;height:23px;background:#f6f6f6"></div>
<div class="abs" style="left:179px;top:833px;width:600px;height:1px;background:#e9e9e9"></div>
<div class="abs" style="left:179px;top:857px;width:600px;height:1px;background:#e9e9e9"></div>
<div class="abs" style="left:179px;top:858px;width:600px;height:23px;background:#f6f6f6"></div>
<div class="abs" style="left:179px;top:881px;width:600px;height:1px;background:#e9e9e9"></div>
<div class="abs" style="left:179px;top:905px;width:600px;height:1px;background:#e9e9e9"></div>
<div class="abs" style="left:179px;top:906px;width:600px;height:23px;background:#f6f6f6"></div>
<div class="abs" style="left:179px;top:929px;width:600px;height:1px;background:#e9e9e9"></div>
<div class="abs" style="left:179px;top:713.5px;width:608px;height:1.5px;background:#e3e3e3"></div>
<div class="abs" style="left:779px;top:715px;width:8px;height:215px;background:#c9c9c9"></div>
<div class="t" style="left:190.00px;top:721.00px;font-size:10.5px;color:#4a76cc;">Alice Phillips</div>
<div class="t" style="left:333.30px;top:722.00px;font-size:10.05px;color:#4a76cc;">+44 (782) 204 5477</div>
<div class="t" style="left:500.80px;top:721.00px;font-size:10.55px;color:#4a76cc;">Streamline Development</div>
<div class="t" style="left:694.77px;top:722.00px;font-size:10.3px;color:#4c4c4c;">1</div>
<div class="t" style="left:728.15px;top:722.00px;font-size:10.3px;color:#4c4c4c;">1.00</div>
<div class="t" style="left:190.00px;top:745.00px;font-size:10.5px;color:#4a76cc;">Bruce Clayton</div>
<div class="t" style="left:333.30px;top:746.00px;font-size:10.05px;color:#4a76cc;">+1 404 389 0476</div>
<div class="t" style="left:500.80px;top:745.00px;font-size:10.55px;color:#4a76cc;">Axiom</div>
<div class="t" style="left:694.77px;top:746.00px;font-size:10.3px;color:#4c4c4c;">4</div>
<div class="t" style="left:728.15px;top:746.00px;font-size:10.3px;color:#4c4c4c;">3.00</div>
<div class="t" style="left:190.00px;top:769.00px;font-size:10.5px;color:#4a76cc;">Grace Stewart</div>
<div class="t" style="left:333.30px;top:770.00px;font-size:10.05px;color:#4a76cc;">+1 404 047 2547</div>
<div class="t" style="left:500.80px;top:769.00px;font-size:10.55px;color:#4a76cc;">Clearsoft</div>
<div class="t" style="left:694.77px;top:770.00px;font-size:10.3px;color:#4c4c4c;">3</div>
<div class="t" style="left:728.15px;top:770.00px;font-size:10.3px;color:#4c4c4c;">3.00</div>
<div class="t" style="left:190.00px;top:793.00px;font-size:10.5px;color:#4a76cc;">Jason Robinson</div>
<div class="t" style="left:333.30px;top:794.00px;font-size:10.05px;color:#4a76cc;">+44 782 234 6352</div>
<div class="t" style="left:500.80px;top:793.00px;font-size:10.55px;color:#4a76cc;">Our company</div>
<div class="t" style="left:694.77px;top:794.00px;font-size:10.3px;color:#4c4c4c;">3</div>
<div class="t" style="left:728.15px;top:794.00px;font-size:10.3px;color:#4c4c4c;">3.00</div>
<div class="t" style="left:190.00px;top:817.00px;font-size:10.5px;color:#4a76cc;">Henry Wayne</div>
<div class="t" style="left:333.30px;top:818.00px;font-size:10.05px;color:#4a76cc;">+1 359 258 9878</div>
<div class="t" style="left:500.80px;top:817.00px;font-size:10.55px;color:#4a76cc;">Apex Solutions</div>
<div class="t" style="left:689.04px;top:818.00px;font-size:10.3px;color:#4c4c4c;">13</div>
<div class="t" style="left:728.15px;top:818.00px;font-size:10.3px;color:#4c4c4c;">3.61</div>
<div class="t" style="left:190.00px;top:841.00px;font-size:10.5px;color:#4a76cc;">Ralph Watson</div>
<div class="t" style="left:333.30px;top:842.00px;font-size:10.05px;color:#4a76cc;">+1 206 643 5417</div>
<div class="t" style="left:500.80px;top:841.00px;font-size:10.55px;color:#4a76cc;">Creative Solutions</div>
<div class="t" style="left:689.04px;top:842.00px;font-size:10.3px;color:#4c4c4c;">22</div>
<div class="t" style="left:728.15px;top:842.00px;font-size:10.3px;color:#4c4c4c;">3.86</div>
<div class="t" style="left:190.00px;top:865.00px;font-size:10.5px;color:#4a76cc;">Andrew Baker</div>
<div class="t" style="left:333.30px;top:866.00px;font-size:10.05px;color:#4a76cc;">+1 617 221 5187</div>
<div class="t" style="left:500.80px;top:865.00px;font-size:10.55px;color:#4a76cc;">Accom</div>
<div class="t" style="left:694.77px;top:866.00px;font-size:10.3px;color:#4c4c4c;">1</div>
<div class="t" style="left:728.15px;top:866.00px;font-size:10.3px;color:#4c4c4c;">4.00</div>
<div class="t" style="left:190.00px;top:889.00px;font-size:10.5px;color:#4a76cc;">Travis Barker</div>
<div class="t" style="left:333.30px;top:890.00px;font-size:10.05px;color:#4a76cc;">+44 (781) 254 2568</div>
<div class="t" style="left:500.80px;top:889.00px;font-size:10.55px;color:#4a76cc;">Apex Solutions</div>
<div class="t" style="left:694.77px;top:890.00px;font-size:10.3px;color:#4c4c4c;">2</div>
<div class="t" style="left:728.15px;top:890.00px;font-size:10.3px;color:#4c4c4c;">4.00</div>
<div class="t" style="left:190.00px;top:913.00px;font-size:10.5px;color:#4a76cc;">Alexander Wilson</div>
<div class="t" style="left:333.30px;top:914.00px;font-size:10.05px;color:#4a76cc;">+1 (212) 854 7512</div>
<div class="t" style="left:500.80px;top:913.00px;font-size:10.55px;color:#4a76cc;">Alpha Business</div>
<div class="t" style="left:694.77px;top:914.00px;font-size:10.3px;color:#4c4c4c;">5</div>
<div class="t" style="left:728.15px;top:914.00px;font-size:10.3px;color:#4c4c4c;">4.00</div>
<div class="panel" style="left:803px;top:659px;width:610px;height:301px"></div>
<div class="abs" style="left:803px;top:659px;width:610px;height:2px;background:#8a5cc9;border-radius:1px 1px 0 0"></div>
<div class="t" style="left:815.00px;top:670.00px;font-size:12.6px;color:#8b61c8;">Assignees with lowest satisfaction rate (last 30 days)</div>
<svg class="abs" style="left:1350.2px;top:666.8px" width="58.0" height="18" viewBox="1350.2 666.8 58.0 18"><path d="M1362.20 671.00 L1357.80 671.00 L1362.20 675.40 Z" fill="#8a5cc9"/><path d="M1352.20 681.00 L1352.20 676.60 L1356.60 681.00 Z" fill="#8a5cc9"/><path d="M1359.80 673.40 L1358.20 675.00 M1356.20 677.00 L1354.60 678.60" stroke="#8a5cc9" stroke-width="1.3"/><path d="M1387.44 669.65 L1388.96 669.65 L1389.71 671.14 L1390.42 671.43 L1392.02 670.91 L1393.09 671.98 L1392.57 673.58 L1392.86 674.29 L1394.35 675.04 L1394.35 676.56 L1392.86 677.31 L1392.57 678.02 L1393.09 679.62 L1392.02 680.69 L1390.42 680.17 L1389.71 680.46 L1388.96 681.95 L1387.44 681.95 L1386.69 680.46 L1385.98 680.17 L1384.38 680.69 L1383.31 679.62 L1383.83 678.02 L1383.54 677.31 L1382.05 676.56 L1382.05 675.04 L1383.54 674.29 L1383.83 673.58 L1383.31 671.98 L1384.38 670.91 L1385.98 671.43 L1386.69 671.14 Z" fill="none" stroke="#8a5cc9" stroke-width="0.9" opacity="0.75" stroke-linejoin="round"/><circle cx="1388.20" cy="675.80" r="2.3" fill="none" stroke="#8a5cc9" stroke-width="0.9" opacity="0.75"/><path d="M1397.70 674.00 L1404.20 674.00 L1400.95 677.80 Z" fill="#8a5cc9"/></svg>
<div class="t" style="left:815.00px;top:697.00px;font-size:10px;color:#9a9a9a;transform:scaleX(0.9566);transform-origin:0 0;">Full name</div>
<div class="t" style="left:1326.50px;top:697.00px;font-size:10px;color:#9a9a9a;transform:scaleX(0.9619);transform-origin:0 0;">Average rate</div>
<div class="abs" style="left:804px;top:714px;width:608px;height:23px;background:#f6f6f6"></div>
<div class="abs" style="left:804px;top:737px;width:608px;height:1px;background:#e9e9e9"></div>
<div class="abs" style="left:804px;top:761px;width:608px;height:1px;background:#e9e9e9"></div>
<div class="abs" style="left:804px;top:762px;width:608px;height:23px;background:#f6f6f6"></div>
<div class="abs" style="left:804px;top:785px;width:608px;height:1px;background:#e9e9e9"></div>
<div class="abs" style="left:804px;top:809px;width:608px;height:1px;background:#e9e9e9"></div>
<div class="abs" style="left:804px;top:810px;width:608px;height:23px;background:#f6f6f6"></div>
<div class="abs" style="left:804px;top:833px;width:608px;height:1px;background:#e9e9e9"></div>
<div class="abs" style="left:804px;top:857px;width:608px;height:1px;background:#e9e9e9"></div>
<div class="abs" style="left:804px;top:858px;width:608px;height:23px;background:#f6f6f6"></div>
<div class="abs" style="left:804px;top:881px;width:608px;height:1px;background:#e9e9e9"></div>
<div class="abs" style="left:804px;top:905px;width:608px;height:1px;background:#e9e9e9"></div>
<div class="abs" style="left:804px;top:906px;width:608px;height:23px;background:#f6f6f6"></div>
<div class="abs" style="left:804px;top:929px;width:608px;height:1px;background:#e9e9e9"></div>
<div class="abs" style="left:804px;top:713.5px;width:608px;height:1.5px;background:#e3e3e3"></div>
<div class="t" style="left:815.00px;top:721.00px;font-size:10.5px;color:#4a76cc;">Jason Robinson</div>
<div class="t" style="left:1361.35px;top:722.00px;font-size:10.3px;color:#4c4c4c;">3.00</div>
<div class="t" style="left:815.00px;top:745.00px;font-size:10.5px;color:#4a76cc;">Sarah M. Richards</div>
<div class="t" style="left:1361.35px;top:746.00px;font-size:10.3px;color:#4c4c4c;">3.20</div>
<div class="t" style="left:815.00px;top:769.00px;font-size:10.5px;color:#4a76cc;">Megan Lewis</div>
<div class="t" style="left:1361.35px;top:770.00px;font-size:10.3px;color:#4c4c4c;">3.25</div>
<div class="t" style="left:815.00px;top:793.00px;font-size:10.5px;color:#4a76cc;">Mary King</div>
<div class="t" style="left:1361.35px;top:794.00px;font-size:10.3px;color:#4c4c4c;">3.50</div>
<div class="t" style="left:815.00px;top:817.00px;font-size:10.5px;color:#4a76cc;">William Walker</div>
<div class="t" style="left:1361.35px;top:818.00px;font-size:10.3px;color:#4c4c4c;">3.60</div>
<div class="t" style="left:815.00px;top:841.00px;font-size:10.5px;color:#4a76cc;">Kate Roberts</div>
<div class="t" style="left:1361.35px;top:842.00px;font-size:10.3px;color:#4c4c4c;">3.73</div>
<div class="t" style="left:815.00px;top:865.00px;font-size:10.5px;color:#4a76cc;">Tiffany J. Martin</div>
<div class="t" style="left:1361.35px;top:866.00px;font-size:10.3px;color:#4c4c4c;">3.75</div>
<div class="t" style="left:815.00px;top:889.00px;font-size:10.5px;color:#4a76cc;">Steven Peterson</div>
<div class="t" style="left:1361.35px;top:890.00px;font-size:10.3px;color:#4c4c4c;">3.88</div>
<div class="t" style="left:815.00px;top:913.00px;font-size:10.5px;color:#4a76cc;">Peter Moore</div>
<div class="t" style="left:1361.35px;top:914.00px;font-size:10.3px;color:#4c4c4c;">5.00</div>
<svg class="abs" style="left:1375px;top:85px" width="40" height="24" viewBox="1375 85 40 24"><path d="M1388.82 90.75 L1390.38 90.75 L1391.11 92.44 L1391.82 92.73 L1393.54 92.06 L1394.64 93.16 L1393.97 94.88 L1394.26 95.59 L1395.95 96.32 L1395.95 97.88 L1394.26 98.61 L1393.97 99.32 L1394.64 101.04 L1393.54 102.14 L1391.82 101.47 L1391.11 101.76 L1390.38 103.45 L1388.82 103.45 L1388.09 101.76 L1387.38 101.47 L1385.66 102.14 L1384.56 101.04 L1385.23 99.32 L1384.94 98.61 L1383.25 97.88 L1383.25 96.32 L1384.94 95.59 L1385.23 94.88 L1384.56 93.16 L1385.66 92.06 L1387.38 92.73 L1388.09 92.44 Z" fill="none" stroke="#6a7a9a" stroke-width="1" stroke-linejoin="round"/><circle cx="1389.6" cy="97.1" r="2.4" fill="none" stroke="#6a7a9a" stroke-width="1"/><path d="M1399.3 95.5 L1406 95.5 L1402.65 99.2 Z" fill="#45598a"/></svg>
<div class="abs" style="left:1472px;top:0;width:8px;height:868px;background:#cbcbcb"></div>
<div class="abs" style="left:1472px;top:868px;width:8px;height:57px;background:#f4f4f4"></div>
<div class="abs" style="left:1471px;top:0;width:1px;height:925px;background:#eef1f2"></div>
<svg class="abs" style="left:1430px;top:4px" width="42" height="40" viewBox="1430 4 42 40">
<defs><clipPath id="av"><circle cx="1449.6" cy="24" r="14.4"/></clipPath>
<filter id="bl" x="-20%" y="-20%" width="140%" height="140%"><feGaussianBlur stdDeviation="0.6"/></filter></defs>
<circle cx="1449.6" cy="24" r="14.4" fill="#f3f3ee"/>
<g clip-path="url(#av)" filter="url(#bl)">
<rect x="1435" y="15" width="4" height="18" fill="#dcdccb"/><rect x="1459.5" y="15" width="4" height="18" fill="#dcdccb"/>
<path d="M1441 44 Q1442 35 1450 35 Q1458 35 1459 44 Z" fill="#eef0f4"/>
<path d="M1442.3 15 L1458 15 Q1458.6 38.5 1450 38.5 Q1442 38.5 1442.3 15 Z" fill="#d4a48a"/>
<path d="M1440.2 24 Q1439 10.5 1450 10 Q1460.5 10.5 1459 24 L1457.8 21 Q1457 17.5 1450 17 Q1443.5 17.5 1442.3 21 Z" fill="#2a1f1b"/>
<rect x="1444.5" y="22.4" width="3" height="1.2" fill="#6d4a3c"/><rect x="1451.8" y="22.4" width="3" height="1.2" fill="#6d4a3c"/>
<path d="M1446.8 30.4 Q1449.8 31.6 1452.8 30.4" stroke="#b57564" stroke-width="1" fill="none"/>
</g>
<circle cx="1463.4" cy="9.5" r="2.8" fill="#7cc451"/>
</svg>
<svg class="abs" style="left:1438px;top:40px" width="26" height="50" viewBox="1438 40 26 50"><path d="M1449.23 43.07 L1451.57 43.07 L1452.62 45.75 L1453.67 46.18 L1456.31 45.04 L1457.96 46.69 L1456.82 49.33 L1457.25 50.38 L1459.93 51.43 L1459.93 53.77 L1457.25 54.82 L1456.82 55.87 L1457.96 58.51 L1456.31 60.16 L1453.67 59.02 L1452.62 59.45 L1451.57 62.13 L1449.23 62.13 L1448.18 59.45 L1447.13 59.02 L1444.49 60.16 L1442.84 58.51 L1443.98 55.87 L1443.55 54.82 L1440.87 53.77 L1440.87 51.43 L1443.55 50.38 L1443.98 49.33 L1442.84 46.69 L1444.49 45.04 L1447.13 46.18 L1448.18 45.75 Z" fill="#8cc152"/><circle cx="1450.4" cy="52.6" r="2.6" fill="#e9edee"/><circle cx="1450.4" cy="76" r="9.7" fill="#8cc152"/><path d="M1447.2 73.2 Q1447.2 69.8 1450.5 69.8 Q1453.8 69.8 1453.8 73 Q1453.8 75 1451.8 75.8 Q1450.5 76.4 1450.5 78.2" fill="none" stroke="#fff" stroke-width="1.9"/><rect x="1449.4" y="80" width="2.2" height="2.2" fill="#fff"/></svg>
<svg class="abs" style="left:1428px;top:365px" width="44" height="205" viewBox="1428 365 44 205"><defs><filter id="sh" x="-30%" y="-30%" width="160%" height="160%"><feDropShadow dx="0" dy="1" stdDeviation="0.8" flood-color="#000" flood-opacity="0.18"/></filter></defs><circle cx="1450.6" cy="386.5" r="15.4" fill="#98b0e6" filter="url(#sh)"/><circle cx="1450.6" cy="426.5" r="15.4" fill="#98b0e6" filter="url(#sh)"/><circle cx="1450.6" cy="466.5" r="15.4" fill="#98b0e6" filter="url(#sh)"/><circle cx="1450.6" cy="506.5" r="15.4" fill="#98b0e6" filter="url(#sh)"/><circle cx="1450.6" cy="546.5" r="15.4" fill="#98b0e6" filter="url(#sh)"/><path d="M1443.5 380.5 Q1443 384 1446 388 Q1450 393 1455 393.5 L1457.5 391 L1454 388.5 L1452.2 390 Q1449 388.5 1447.5 385 L1449 383.2 L1446.5 379.5 Z" fill="#fff"/><rect x="1442.5" y="420.5" width="16.5" height="12" fill="#fff"/><path d="M1442.5 420.5 L1450.75 427.5 L1459 420.5" fill="none" stroke="#98b0e6" stroke-width="1"/><path d="M1441.5 459 L1452 459 L1452 467 L1444.5 467 L1442.5 469.5 L1442.5 467 L1441.5 467 Z" fill="#fff"/><rect x="1447" y="462.5" width="13" height="9.5" fill="#98b0e6"/><path d="M1448 463.5 L1459.5 463.5 L1459.5 471 L1458 471 L1458 473.5 L1455.5 471 L1448 471 Z" fill="#fff"/><path d="M1450.6 498 Q1445.5 498.5 1445.5 504 L1445.5 509 L1443.5 511.5 L1457.7 511.5 L1455.7 509 L1455.7 504 Q1455.7 498.5 1450.6 498 Z" fill="#fff"/><circle cx="1450.6" cy="513.3" r="1.5" fill="#fff"/><path d="M1444 538 L1455 538 L1455 546 L1450 553 L1444 553 Z" fill="#fff"/><g fill="#98b0e6"><rect x="1446" y="540.5" width="1.3" height="1.2"/><rect x="1448.3" y="540.5" width="5" height="1.2"/><rect x="1446" y="543.3" width="1.3" height="1.2"/><rect x="1448.3" y="543.3" width="5" height="1.2"/><rect x="1446" y="546.1" width="1.3" height="1.2"/><rect x="1448.3" y="546.1" width="3.5" height="1.2"/></g><path d="M1451 545 L1458.5 550 L1451 555 Z" fill="#fff"/><circle cx="1439.5" cy="495" r="7" fill="#ff0000"/></svg>
<div class="t" style="left:1436.72px;top:491.00px;font-size:10px;color:#fff;font-weight:bold;">7</div>
</body></html>
